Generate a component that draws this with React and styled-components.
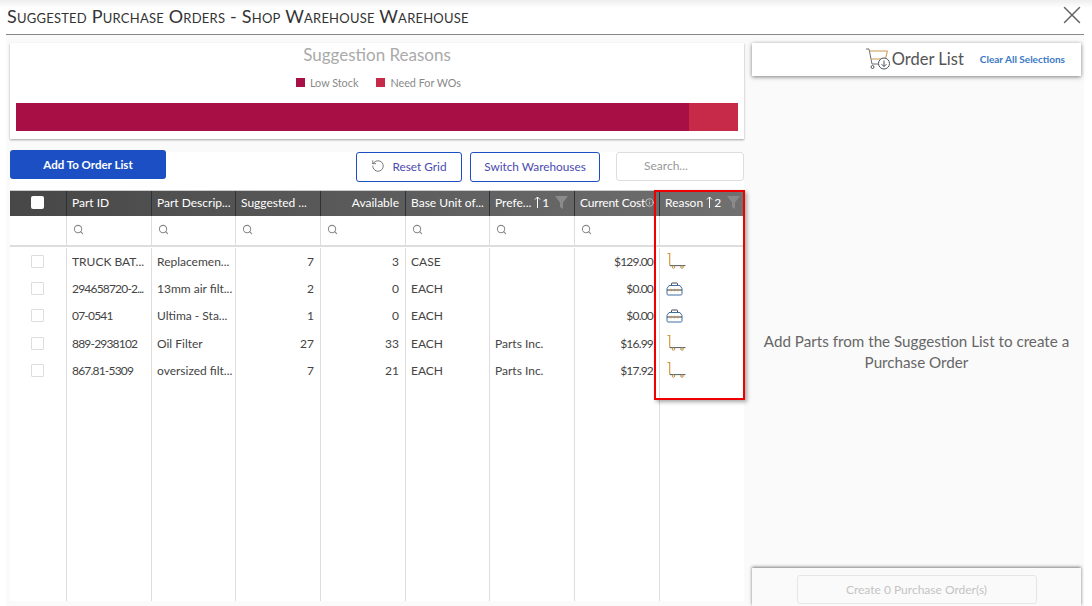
import styled, { createGlobalStyle } from "styled-components";
import { RotateCcw, Search, X, Info } from "lucide-react";

const rows = [
  { id: "TRUCK BAT...", desc: "Replacemen...", qty: 7, avail: 3, unit: "CASE", pref: "", cost: "$129.00", reason: "cart" },
  { id: "294658720-2...", desc: "13mm air filt...", qty: 2, avail: 0, unit: "EACH", pref: "", cost: "$0.00", reason: "box" },
  { id: "07-0541", desc: "Ultima - Sta...", qty: 1, avail: 0, unit: "EACH", pref: "", cost: "$0.00", reason: "box" },
  { id: "889-2938102", desc: "Oil Filter", qty: 27, avail: 33, unit: "EACH", pref: "Parts Inc.", cost: "$16.99", reason: "cart" },
  { id: "867.81-5309", desc: "oversized filt...", qty: 7, avail: 21, unit: "EACH", pref: "Parts Inc.", cost: "$17.92", reason: "cart" },
];

function CartReason() {
  return (
    <svg width="20" height="17" viewBox="0 0 20 17" fill="none">
      <path d="M1.5 .5h2.2v11.2c0 .6.4 1 1 1" stroke="#d1912f" strokeWidth="1.1" />
      <path d="M4 12.6h15.5" stroke="#4c5c6c" strokeWidth="1" />
      <circle cx="7.5" cy="14" r="1.3" stroke="#b98535" strokeWidth="0.9" />
      <circle cx="16" cy="14" r="1.3" stroke="#b98535" strokeWidth="0.9" />
    </svg>
  );
}

function BoxReason() {
  return (
    <svg width="17" height="14" viewBox="0 0 17 14" fill="none">
      <path d="M5.5 3.5V1.6c0-.4.3-.6.6-.6h4.8c.3 0 .6.2.6.6v1.9" stroke="#3f4a55" strokeWidth="1" />
      <path d="M3 3.5h11l2 3v5.4c0 .6-.5 1.1-1.1 1.1H2.1c-.6 0-1.1-.5-1.1-1.1V6.500z" stroke="#3f6f9f" strokeWidth="1" />
      <path d="M1 8h15" stroke="#333c45" strokeWidth="1" />
      <path d="M5 6.8v2.6M8.5 6.8v2.6M12 6.8v2.6" stroke="#c98f3a" strokeWidth="1" />
    </svg>
  );
}

function CartDownload() {
  return (
    <svg width="26" height="24" viewBox="0 0 26 24" fill="none">
      <path d="M1 2h3l3 15h9" stroke="#6c6f73" strokeWidth="1" />
      <path d="M4.4 4h18l-2 8H6" stroke="#c9954b" strokeWidth="1" />
      <circle cx="7.5" cy="20" r="1.5" stroke="#555" strokeWidth="1" />
      <circle cx="19" cy="16.5" r="5.5" fill="#fff" stroke="#4a5560" strokeWidth="1" />
      <path d="M19 13.5v6M16.6 17.2l2.4 2.4 2.4-2.4" stroke="#4a5560" strokeWidth="1" />
    </svg>
  );
}

function FunnelIcon() {
  return (
    <svg width="13" height="13" viewBox="0 0 13 13">
      <path d="M0 0h13L8 6.5V13L5 11V6.5z" fill="#8a8a8a" />
    </svg>
  );
}

function SortMark({ n }) {
  return (
    <SortWrap>
      <svg width="7" height="12" viewBox="0 0 7 12" fill="none">
        <path d="M3.5 12V1M1 3.5 3.5 1 6 3.5" stroke="#fff" strokeWidth="1" />
      </svg>
      {n}
    </SortWrap>
  );
}

export default function App() {
  return (
    <Page>
      <GlobalStyle />
      <Header>
        <Title>Suggested Purchase Orders - Shop Warehouse Warehouse</Title>
        <CloseBtn>
          <X size={30} strokeWidth={1.2} />
        </CloseBtn>
      </Header>
      <Body>
        <Left>
          <ChartCard>
            <ChartTitle>Suggestion Reasons</ChartTitle>
            <Legend>
              <LegendItem>
                <Swatch $color="#a81045" />
                Low Stock
              </LegendItem>
              <LegendItem>
                <Swatch $color="#c72a48" />
                Need For WOs
              </LegendItem>
            </Legend>
            <Bar>
              <BarPart $color="#a81045" $grow={673} />
              <BarPart $color="#c72a48" $grow={49} />
            </Bar>
          </ChartCard>
          <GridPanel>
            <Toolbar>
              <AddButton>Add To Order List</AddButton>
              <ToolRight>
                <OutlineButton $width={106}>
                  <RotateCcw size={14} strokeWidth={1.3} color="#555" />
                  Reset Grid
                </OutlineButton>
                <OutlineButton $width={130}>Switch Warehouses</OutlineButton>
                <SearchBox placeholder="Search..." />
              </ToolRight>
            </Toolbar>
            <Table>
              <HeadRow>
                <HeadCell $center>
                  <HeadCheck />
                </HeadCell>
                <HeadCell>Part ID</HeadCell>
                <HeadCell>Part Descrip...</HeadCell>
                <HeadCell>Suggested ...</HeadCell>
                <HeadCell $right>Available</HeadCell>
                <HeadCell>Base Unit of...</HeadCell>
                <HeadCell>
                  <HeadLabel>Prefe...</HeadLabel>
                  <SortMark n={1} />
                  <FunnelIcon />
                </HeadCell>
                <HeadCell $tight>
                  Current Cost
                  <Info size={9} strokeWidth={1.5} />
                </HeadCell>
                <HeadCell>
                  <HeadLabel>Reason</HeadLabel>
                  <SortMark n={2} />
                  <FunnelIcon />
                </HeadCell>
              </HeadRow>
              <FilterRow>
                <FilterCell />
                {Array.from({ length: 7 }).map((_, i) => (
                  <FilterCell key={i}>
                    <Search size={11} strokeWidth={2.2} color="#888" />
                  </FilterCell>
                ))}
                <FilterCell />
              </FilterRow>
              <Rows>
                {rows.map((r) => (
                  <Row key={r.id}>
                    <Cell $center>
                      <RowCheck />
                    </Cell>
                    <Cell $numeric={/^[\d.-]+$/.test(r.id)}>{r.id}</Cell>
                    <Cell>{r.desc}</Cell>
                    <Cell $right>{r.qty}</Cell>
                    <Cell $right>{r.avail}</Cell>
                    <Cell>{r.unit}</Cell>
                    <Cell>{r.pref}</Cell>
                    <Cell $right $numeric>
                      {r.cost}
                    </Cell>
                    <ReasonCell>{r.reason === "cart" ? <CartReason /> : <BoxReason />}</ReasonCell>
                  </Row>
                ))}
                <FillRow>
                  {Array.from({ length: 9 }).map((_, i) => (
                    <Cell key={i} />
                  ))}
                </FillRow>
              </Rows>
              <Highlight />
            </Table>
          </GridPanel>
        </Left>
        <Right>
          <OrderCard>
            <CartDownload />
            <OrderTitle>Order List</OrderTitle>
            <ClearLink>Clear All Selections</ClearLink>
          </OrderCard>
          <EmptyNote>Add Parts from the Suggestion List to create a Purchase Order</EmptyNote>
          <Footer>
            <CreateButton>Create 0 Purchase Order(s)</CreateButton>
          </Footer>
        </Right>
      </Body>
    </Page>
  );
}

const GlobalStyle = createGlobalStyle`
  html, body {
    margin: 0;
    padding: 0;
    background: #fff;
  }
  body {
    font-family: Lato, "Open Sans", sans-serif;
    color: #444;
  }
`;

const Page = styled.div`
  width: 1092px;
  height: 606px;
  overflow: hidden;
  display: flex;
  flex-direction: column;
  padding: 0 8px 0 6px;
  box-sizing: border-box;
  background: linear-gradient(#eeeeee 0, #fff 8px);
`;
const Header = styled.div`
  height: 35px;
  box-sizing: border-box;
  padding-bottom: 2px;
  flex: none;
  display: flex;
  align-items: center;
  justify-content: space-between;
  border-bottom: 1px solid #888;
`;
const Title = styled.h1`
  margin: 0;
  padding-left: 1px;
  font-size: 18px;
  font-weight: 400;
  font-variant: small-caps;
  color: #333;
  letter-spacing: 0.22px;
`;
const CloseBtn = styled.div`
  display: flex;
  color: #666;
  margin: 0 -3px 2px 0;
`;
const Body = styled.div`
  flex: 1;
  min-height: 0;
  display: flex;
  background: #fafafa;
  padding: 8px 0 0 4px;
`;
const Left = styled.div`
  width: 734px;
  flex: none;
  display: flex;
  flex-direction: column;
`;
const ChartCard = styled.div`
  height: 96px;
  flex: none;
  background: #fff;
  padding: 0 6px;
  box-shadow: 0 1px 2px rgba(0, 0, 0, 0.35);
  display: flex;
  flex-direction: column;
  box-sizing: border-box;
`;
const ChartTitle = styled.div`
  margin-top: 1px;
  text-align: center;
  color: #aaa;
  font-size: 17px;
  line-height: 21px;
`;
const Legend = styled.div`
  margin-top: 11px;
  display: flex;
  justify-content: center;
  gap: 18px;
  height: 12px;
  padding-left: 3px;
`;
const LegendItem = styled.div`
  display: flex;
  align-items: center;
  gap: 5px;
  font-size: 10.8px;
  color: #888;
`;
const Swatch = styled.span`
  width: 9px;
  height: 9px;
  background: ${(p) => p.$color};
`;
const Bar = styled.div`
  margin-top: 15px;
  height: 28px;
  display: flex;
`;
const BarPart = styled.div`
  flex: ${(p) => p.$grow} 0 0;
  background: ${(p) => p.$color};
`;
const GridPanel = styled.div`
  flex: 1;
  min-height: 0;
  margin-top: 13px;
  margin-bottom: 5px;
  background: #fff;
  display: flex;
  flex-direction: column;
`;
const Toolbar = styled.div`
  height: 38px;
  flex: none;
  display: flex;
  justify-content: space-between;
  align-items: flex-start;
`;
const AddButton = styled.button`
  width: 156px;
  height: 29px;
  margin-top: -2px;
  padding: 0;
  border: 0;
  border-radius: 3px;
  background: #1c4fc4;
  color: #fff;
  font: 700 11.5px Lato, sans-serif;
`;
const ToolRight = styled.div`
  display: flex;
  gap: 8px;
`;
const OutlineButton = styled.button`
  width: ${(p) => p.$width}px;
  height: 30px;
  padding: 0 0 2px;
  box-sizing: border-box;
  display: flex;
  align-items: center;
  justify-content: center;
  gap: 7px;
  border: 1px solid #1c4fc4;
  border-radius: 3px;
  background: #fff;
  color: #4a4ab0;
  font: 400 11.8px Lato, sans-serif;
`;
const SearchBox = styled.input`
  width: 128px;
  height: 29px;
  margin-left: 8px;
  box-sizing: border-box;
  border: 1px solid #ddd;
  border-radius: 3px;
  padding: 0 27px 2px;
  background: #fff;
  font: 400 12px Lato, sans-serif;
  &::placeholder {
    color: #999;
  }
`;
const Table = styled.div`
  position: relative;
  flex: 1;
  min-height: 0;
  display: flex;
  flex-direction: column;
`;
const columns = "57px 85px 84px 85px 85px 84px 85px 85px 84px";
const HeadRow = styled.div`
  display: grid;
  grid-template-columns: ${columns};
  height: 26px;
  box-sizing: border-box;
  flex: none;
  background: linear-gradient(90deg, #474747, #707070);
  color: #fff;
  border-top: 1px solid #ccc;
`;
const HeadCell = styled.div`
  display: flex;
  align-items: center;
  justify-content: ${(p) => (p.$center ? "center" : p.$right ? "flex-end" : "flex-start")};
  gap: ${(p) => (p.$tight ? 0 : 3)}px;
  padding: 0 ${(p) => (p.$tight ? 3 : 6)}px 3px 5px;
  border-right: 1px solid #2b3238;
  font-size: 12px;
  letter-spacing: ${(p) => (p.$tight ? "-0.2px" : "normal")};
  white-space: nowrap;
  overflow: hidden;
  min-width: 0;
  svg {
    flex: none;
  }
  &:last-child {
    border-right: 0;
  }
`;
const HeadLabel = styled.span`
  flex: 1;
`;
const SortWrap = styled.span`
  display: inline-flex;
  align-items: center;
  gap: 1px;
  margin-right: 3px;
`;
const HeadCheck = styled.span`
  width: 13px;
  height: 13px;
  background: #fff;
  border-radius: 2px;
`;
const FilterRow = styled.div`
  display: grid;
  grid-template-columns: ${columns};
  height: 29px;
  flex: none;
  border-bottom: 2px solid #ddd;
`;
const FilterCell = styled.div`
  display: flex;
  align-items: center;
  padding: 0 5px 2px 6px;
  border-right: 1px solid #ddd;
  &:last-child {
    border-right: 0;
  }
`;
const Rows = styled.div`
  flex: 1;
  min-height: 0;
  display: flex;
  flex-direction: column;
  padding-top: 0.5px;
`;
const Row = styled.div`
  display: grid;
  grid-template-columns: ${columns};
  height: 27.4px;
  flex: none;
`;
const FillRow = styled.div`
  display: grid;
  grid-template-columns: ${columns};
  flex: 1;
`;
const Cell = styled.div`
  display: flex;
  align-items: center;
  justify-content: ${(p) => (p.$center ? "center" : p.$right ? "flex-end" : "flex-start")};
  padding: 0 6px 0 5px;
  min-width: 0;
  border-right: 1px solid #ddd;
  font-size: 12px;
  letter-spacing: ${(p) => (p.$numeric ? "-0.8px" : "normal")};
  white-space: nowrap;
  color: #444;
  &:last-child {
    border-right: 0;
  }
`;
const ReasonCell = styled(Cell)`
  padding-left: 6px;
`;
const RowCheck = styled.span`
  width: 11px;
  height: 11px;
  border: 1px solid #ddd;
  border-radius: 1px;
`;
const Highlight = styled.div`
  position: absolute;
  top: 0;
  right: -1px;
  width: 91px;
  height: 210px;
  box-sizing: border-box;
  border: 2px solid #ee0000;
  box-shadow: 2px 2px 4px rgba(0, 0, 0, 0.35);
`;
const Right = styled.div`
  flex: 1;
  min-width: 0;
  margin-left: 8px;
  margin-right: 3px;
  display: flex;
  flex-direction: column;
`;
const OrderCard = styled.div`
  height: 33px;
  flex: none;
  background: #fff;
  box-shadow: 0 1px 4px rgba(0, 0, 0, 0.5);
  display: flex;
  align-items: center;
  justify-content: flex-end;
  padding: 0 16px 2px 0;
  box-sizing: border-box;
`;
const OrderTitle = styled.span`
  font-size: 16.5px;
  color: #555;
  margin-left: 1px;
`;
const ClearLink = styled.span`
  font-size: 10px;
  font-weight: 700;
  color: #3b78c4;
  margin-left: 16px;
`;
const EmptyNote = styled.div`
  flex: 1;
  display: flex;
  align-items: center;
  justify-content: center;
  text-align: center;
  font-size: 15.2px;
  line-height: 21px;
  color: #666;
  padding: 60px 10px 0;
`;
const Footer = styled.div`
  height: 38px;
  flex: none;
  box-shadow: 0 -1px 3px rgba(0, 0, 0, 0.5);
  background: #fafafa;
  display: flex;
  justify-content: center;
  align-items: flex-start;
  padding-top: 7px;
  box-sizing: border-box;
`;
const CreateButton = styled.button`
  width: 240px;
  height: 29px;
  padding: 0;
  border: 1px solid #e6e6e6;
  border-radius: 3px;
  background: #fafafa;
  color: #c4c4c4;
  font: 400 12px Lato, sans-serif;
`;
